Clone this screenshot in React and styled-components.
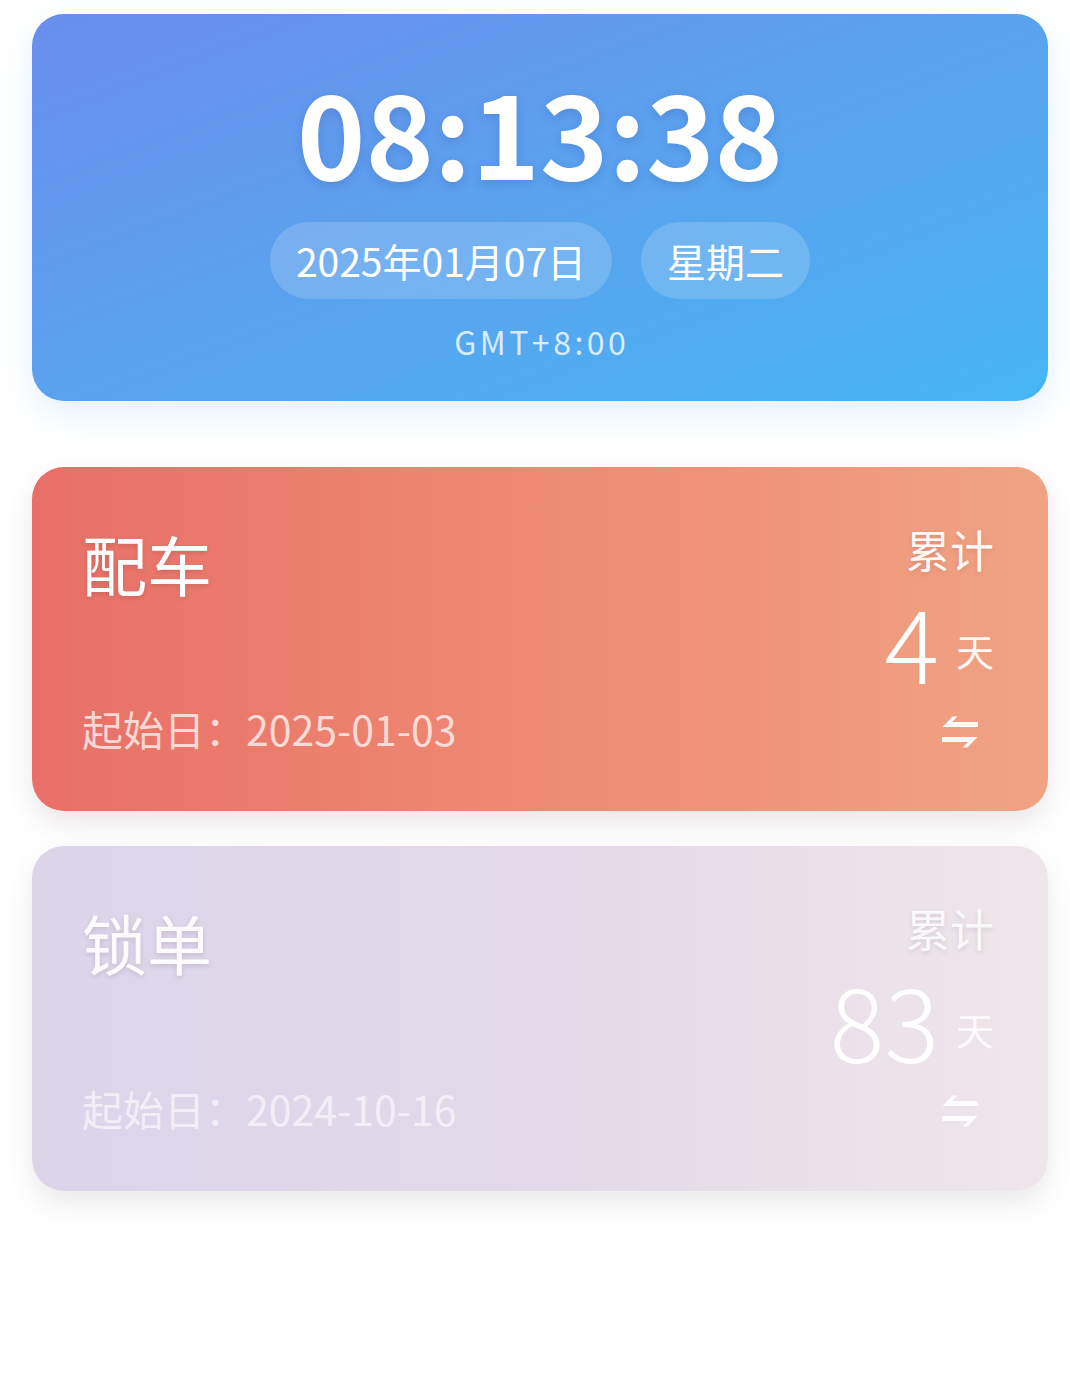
import React from "react";
import styled, { createGlobalStyle, css } from "styled-components";

const GlobalStyle = createGlobalStyle`
  html, body {
    margin: 0;
    padding: 0;
    background: #ffffff;
  }
  body {
    font-family: "Noto Sans CJK SC", "Noto Sans", sans-serif;
    -webkit-font-smoothing: antialiased;
  }
`;

const Page = styled.div`
  display: flex;
  flex-direction: column;
  padding: 14px 22px 40px 32px;
`;

const ClockCard = styled.section`
  display: flex;
  flex-direction: column;
  align-items: center;
  padding: 57px 0 44px;
  border-radius: 32px;
  background: linear-gradient(to bottom right, #6a8eec 0%, #5aa2ee 50%, #47b6f3 100%);
  box-shadow: 0 12px 32px rgba(80, 170, 240, 0.16);
  color: #ffffff;
`;

const Time = styled.div`
  font-size: 116px;
  line-height: 1;
  font-weight: 700;
  letter-spacing: 0;
  text-shadow: 0 3px 10px rgba(30, 60, 140, 0.18);
`;

const PillRow = styled.div`
  display: flex;
  gap: 29px;
  margin-top: 35px;
`;

const Pill = styled.div`
  display: flex;
  align-items: center;
  height: 77px;
  padding: 0 26px;
  border-radius: 39px;
  background: rgba(255, 255, 255, 0.17);
  font-size: 39px;
  line-height: 1;
  font-weight: 400;
`;

const Zone = styled.div`
  margin-top: 26px;
  font-size: 32px;
  line-height: 1;
  letter-spacing: 3.5px;
  padding-left: 3.5px;
  color: rgba(255, 255, 255, 0.8);
`;

const variants = {
  red: css`
    background: linear-gradient(90deg, #e86f68 0%, #ed8571 40%, #ef9479 70%, #f0a384 100%);
    box-shadow: 0 12px 26px rgba(90, 60, 60, 0.13);
  `,
  lilac: css`
    background: linear-gradient(90deg, #dcd5ea 0%, #e3d9e8 50%, #efe6eb 100%);
    box-shadow: 0 12px 26px rgba(80, 70, 90, 0.12);
  `,
};

const CounterCard = styled.section`
  display: flex;
  justify-content: space-between;
  height: ${(p) => p.$height}px;
  margin-top: ${(p) => p.$gap}px;
  padding: 0 54px 0 50px;
  border-radius: 32px;
  color: #ffffff;
  ${(p) => variants[p.$variant]}
`;

const LeftCol = styled.div`
  display: flex;
  flex-direction: column;
  justify-content: space-between;
  padding: 64px 0 62px;
`;

const Title = styled.div`
  font-size: 65px;
  line-height: 1;
  font-weight: 400;
  color: rgba(255, 255, 255, ${(p) => p.$alpha});
  text-shadow: 0 2px 5px rgba(0, 0, 0, 0.12);
`;

const StartDate = styled.div`
  font-size: 41px;
  line-height: 1;
  color: rgba(255, 255, 255, ${(p) => p.$alpha});
`;

const RightCol = styled.div`
  display: flex;
  flex-direction: column;
  align-items: flex-end;
  padding-top: 60px;
`;

const Label = styled.div`
  font-size: 44px;
  line-height: 1;
  color: rgba(255, 255, 255, ${(p) => p.$alpha});
  text-shadow: 0 2px 5px rgba(0, 0, 0, 0.1);
`;

const CountRow = styled.div`
  display: flex;
  align-items: flex-end;
  gap: 17px;
  margin-top: 18px;
`;

const Count = styled.div`
  font-size: 102px;
  line-height: 1;
  font-weight: 300;
  color: #ffffff;
`;

const Unit = styled.div`
  font-size: 38px;
  line-height: 1;
  margin-bottom: 22px;
  color: rgba(255, 255, 255, ${(p) => p.$alpha});
`;

const SwapButton = styled.div`
  display: flex;
  margin-top: 25px;
  margin-right: 16px;
  width: 36px;
  height: 32px;
  color: rgba(255, 255, 255, ${(p) => p.$alpha});
`;

const SwapIcon = () => (
  <svg width="36" height="32" viewBox="0 0 36 32" fill="currentColor">
    <polygon points="0.5,11 10.5,0.5 15.5,0.5 10,6 36,6 36,11" />
    <polygon points="0,21 35.5,21 25.5,31.5 20.5,31.5 26,26 0,26" />
  </svg>
);

const counters = [
  {
    title: "配车",
    start: "2025-01-03",
    days: "4",
    variant: "red",
    height: 344,
    gap: 66,
    alpha: { title: 1, date: 0.72, label: 0.95, unit: 0.95, icon: 0.95 },
  },
  {
    title: "锁单",
    start: "2024-10-16",
    days: "83",
    variant: "lilac",
    height: 345,
    gap: 35,
    alpha: { title: 0.92, date: 0.6, label: 0.85, unit: 0.85, icon: 0.9 },
  },
];

export default function App() {
  return (
    <>
      <GlobalStyle />
      <Page>
        <ClockCard>
          <Time>08:13:38</Time>
          <PillRow>
            <Pill>2025年01月07日</Pill>
            <Pill>星期二</Pill>
          </PillRow>
          <Zone>GMT+8:00</Zone>
        </ClockCard>
        {counters.map((c) => (
          <CounterCard key={c.title} $variant={c.variant} $height={c.height} $gap={c.gap}>
            <LeftCol>
              <Title $alpha={c.alpha.title}>{c.title}</Title>
              <StartDate $alpha={c.alpha.date}>起始日：{c.start}</StartDate>
            </LeftCol>
            <RightCol>
              <Label $alpha={c.alpha.label}>累计</Label>
              <CountRow>
                <Count>{c.days}</Count>
                <Unit $alpha={c.alpha.unit}>天</Unit>
              </CountRow>
              <SwapButton $alpha={c.alpha.icon}>
                <SwapIcon />
              </SwapButton>
            </RightCol>
          </CounterCard>
        ))}
      </Page>
    </>
  );
}
